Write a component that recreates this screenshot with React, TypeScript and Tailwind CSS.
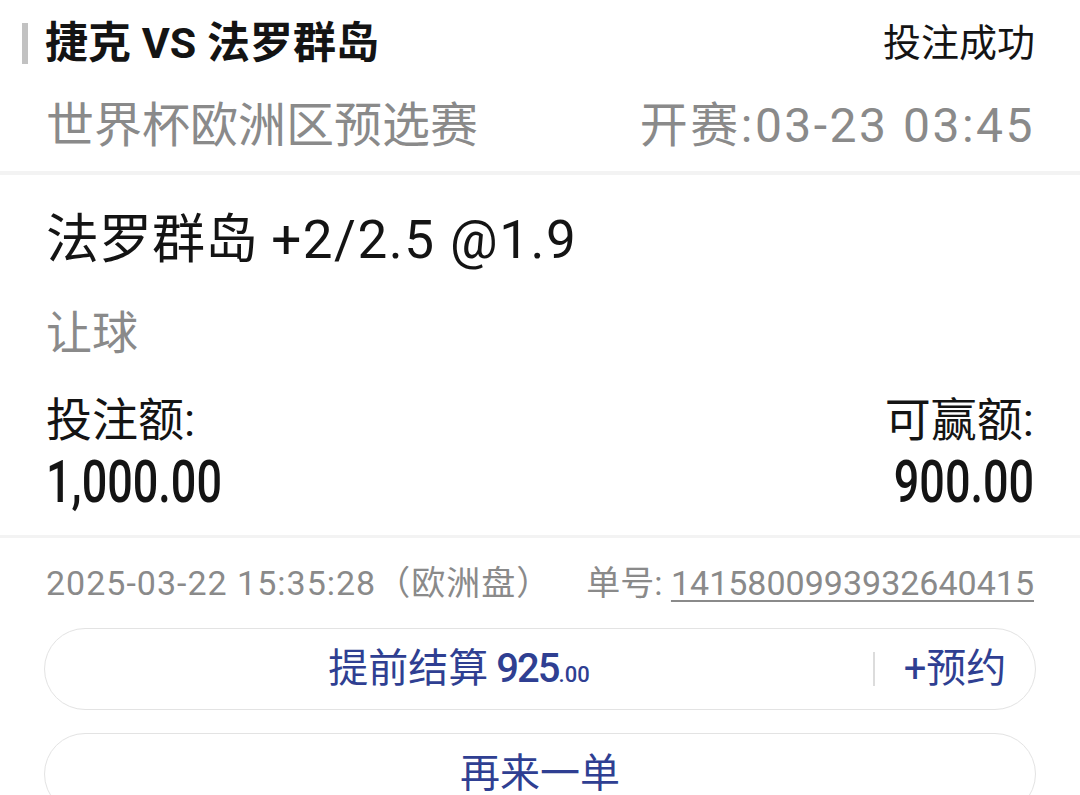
export default function App() {
  return (
    <div className="w-[1080px] h-[795px] overflow-hidden bg-white text-[#141414] font-[family-name:Roboto,'Noto_Sans_CJK_SC',sans-serif]">
      {/* header */}
      <div className="flex h-[86px] items-center justify-between pl-[22px] pr-[45px]">
        <div className="flex items-center">
          <div className="w-[6px] h-[41px] bg-[#c2c2c2] mr-[17px]" />
          <span className="text-[43px] font-bold leading-none">捷克 VS 法罗群岛</span>
        </div>
        <span className="text-[38px] leading-none">投注成功</span>
      </div>
      <div className="flex h-[80px] items-center justify-between pl-[46px] pr-[45px] text-[48px] leading-none text-[#8a8a8a]">
        <span>世界杯欧洲区预选赛</span>
        <span className="tracking-[2.5px]">开赛:03-23 03:45</span>
      </div>
      <div className="mt-[5px] h-[4px] bg-[#f3f3f3]" />

      {/* bet body */}
      <div className="px-[46px]">
        <div className="flex h-[130px] items-center text-[53px] leading-none">
          <span>
            法罗群岛 <span className="tracking-[1.5px]">+2/2.5 @1.9</span>
          </span>
        </div>
        <div className="flex h-[56px] items-center text-[46px] leading-none text-[#8a8a8a]">
          <span>让球</span>
        </div>
        <div className="mt-[31px] flex h-[56px] items-center justify-between text-[46px] leading-none">
          <span>投注额:</span>
          <span>可赢额:</span>
        </div>
        <div className="flex h-[68px] items-center justify-between text-[60px] leading-none font-medium">
          <span className="inline-block origin-left scale-x-[0.75]">1,000.00</span>
          <span className="inline-block origin-right scale-x-[0.75]">900.00</span>
        </div>
      </div>
      <div className="mt-[19px] h-[3px] bg-[#f3f3f3]" />

      {/* meta */}
      <div className="flex h-[90px] items-center justify-between px-[46px] text-[34px] leading-none text-[#8a8a8a]">
        <span className="tracking-[1px]">2025-03-22 15:35:28（欧洲盘）</span>
        <span>
          单号: <span className="underline decoration-[2px] underline-offset-[5px]">1415800993932640415</span>
        </span>
      </div>

      {/* buttons */}
      <div className="flex flex-col gap-[23px] px-[44px] text-[#2f3f92]">
        <div className="flex h-[82px] items-center rounded-full border border-[#e3e3e3]">
          <div className="flex flex-1 items-baseline justify-center text-[40px] leading-none">
            <span>提前结算</span>
            <span className="ml-[8px] font-medium tracking-[-2px]">925</span>
            <span className="text-[22px] font-medium">.00</span>
          </div>
          <div className="h-[34px] w-[2px] bg-[#dcdcdc]" />
          <div className="flex w-[160px] items-center justify-center text-[40px] leading-none">
            <span>+预约</span>
          </div>
        </div>
        <div className="flex h-[82px] items-center justify-center rounded-full border border-[#e3e3e3] text-[40px] leading-none">
          <span>再来一单</span>
        </div>
      </div>
    </div>
  );
}
